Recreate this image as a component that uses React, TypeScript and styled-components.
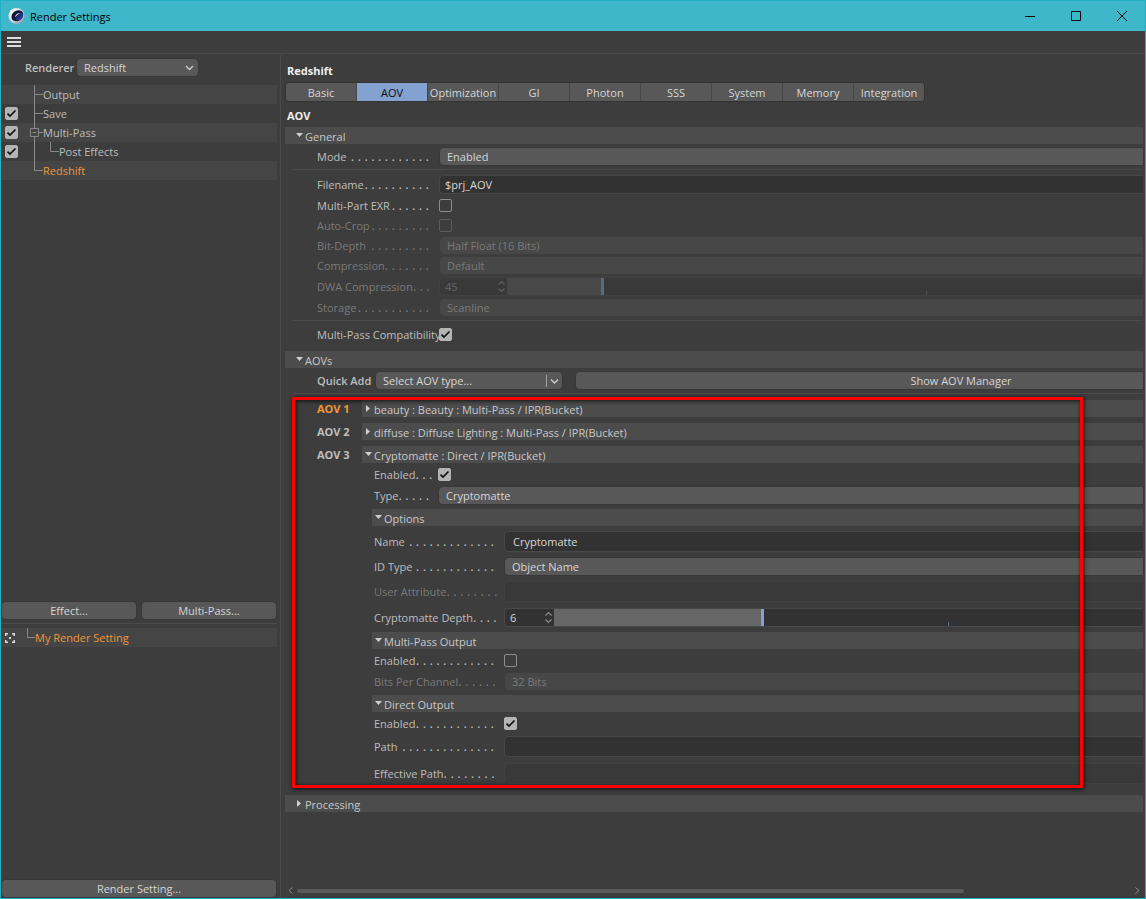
import React, { useId, useState } from "react";
import styled, { createGlobalStyle } from "styled-components";

const c = {
  bg: "#3d3d3d",
  bar: "#4c4c4c",
  stripe: "#454545",
  line: "#4b4b4b",
  control: "#585858",
  controlOff: "#474747",
  well: "#323232",
  wellOff: "#393939",
  text: "#bebebe",
  bright: "#d6d6d6",
  off: "#7a7a7a",
  orange: "#f0963c",
  blue: "#84a2d0",
  cyan: "#3db7c9",
  edge: "#1fb0c4",
};

const GlobalStyle = createGlobalStyle`
  *, *::before, *::after { box-sizing: border-box; }
  body { margin: 0; background: ${c.bg}; }
  body, button, input, select {
    font-family: "Open Sans", "Noto Sans", sans-serif;
    font-size: 11px;
    line-height: 17px;
    color: ${c.text};
  }
  button, input, select { margin: 0; padding: 0; border: 0; outline: 0; }
`;

/* ---------- window frame ---------- */

const Window = styled.div`
  display: flex;
  flex-direction: column;
  min-height: 100vh;
  border: 1px solid ${c.edge};
  background: ${c.bg};
`;

const TitleBar = styled.header`
  display: flex;
  align-items: center;
  height: 30px;
  padding-left: 7px;
  background: ${c.cyan};
`;

const Title = styled.span`
  flex: 1;
  margin-left: 4px;
  color: #000;
`;

const WindowButton = styled.button`
  display: flex;
  align-items: center;
  justify-content: center;
  width: 46px;
  height: 28px;
  background: transparent;
`;

const MenuBar = styled.nav`
  display: flex;
  align-items: center;
  height: 23px;
  padding-left: 6px;
  border-bottom: 1px solid ${c.line};
`;

const IconButton = styled.button`
  display: flex;
  background: transparent;
`;

const Body = styled.div`
  display: flex;
  flex: 1;
  padding-top: 1px;
`;

/* ---------- shared controls ---------- */

const Button = styled.button`
  flex: 1;
  height: 17px;
  border-radius: 4px;
  background: ${c.control};
  box-shadow: 0 0 0 1px #383838;
  color: ${c.bright};
`;

const CheckInput = styled.input`
  appearance: none;
  flex: none;
  width: 13px;
  height: 13px;
  border: 1px solid #8c8c8c;
  border-radius: 2px;
  background: transparent;
  &:checked {
    border-color: #b4b4b4;
    background: #b4b4b4
      url("data:image/svg+xml,%3Csvg xmlns='http://www.w3.org/2000/svg' viewBox='0 0 11 11'%3E%3Cpath d='M1.500 5.6 4 8 9.500 2.500' fill='none' stroke='%23111' stroke-width='1.7'/%3E%3C/svg%3E")
      center / 11px 11px no-repeat;
  }
  &:disabled { border-color: #5c5c5c; }
`;

const Select = styled.select<{ $open?: boolean }>`
  appearance: none;
  flex: 1;
  min-width: 0;
  height: 17px;
  margin-left: 1px;
  padding-left: 7px;
  border-radius: ${(p) => (p.$open ? "4px 0 0 4px" : "4px")};
  background: ${c.control};
  box-shadow: 0 0 0 1px #383838;
  color: ${c.bright};
  &:disabled {
    background: ${c.controlOff};
    color: ${c.off};
    box-shadow: none;
    opacity: 1;
  }
`;

const SelectBox = styled.span<{ $width: number }>`
  position: relative;
  display: flex;
  flex: none;
  width: ${(p) => p.$width}px;
  & > svg {
    position: absolute;
    right: 2px;
    top: 2px;
    pointer-events: none;
  }
`;

const TextInput = styled.input<{ $tall?: boolean }>`
  flex: 1;
  min-width: 0;
  height: ${(p) => (p.$tall ? 21 : 19)}px;
  padding-left: ${(p) => (p.$tall ? 8 : 5)}px;
  border: 1px solid #484848;
  border-right: 0;
  border-radius: 4px 0 0 4px;
  background: ${c.well};
  color: ${c.bright};
  &:disabled { background: ${c.wellOff}; border-color: #414141; color: ${c.off}; }
`;

const NumberBox = styled.span<{ $width: number; $off?: boolean }>`
  display: flex;
  align-items: center;
  flex: none;
  width: ${(p) => p.$width}px;
  height: 19px;
  padding-right: 1px;
  border: 1px solid ${(p) => (p.$off ? "#414141" : "#484848")};
  border-right: 0;
  border-radius: 4px 0 0 4px;
  background: ${(p) => (p.$off ? c.wellOff : c.well)};
  color: ${(p) => (p.$off ? "#5e5e5e" : "#8c8c8c")};
`;

const NumberInput = styled.input`
  flex: 1;
  min-width: 0;
  padding-left: 5px;
  background: transparent;
  color: ${c.bright};
  &:disabled { color: #666; }
`;

const Range = styled.input<{ $fill: number; $tick: number }>`
  appearance: none;
  flex: 1;
  min-width: 0;
  height: 19px;
  border-top: 1px solid #484848;
  border-bottom: 1px solid #484848;
  background:
    linear-gradient(#56708c, #56708c) ${(p) => p.$tick}% 100% / 1px 4px no-repeat,
    linear-gradient(#666, #666) 0 0 / ${(p) => p.$fill}% 100% no-repeat,
    ${c.well};
  &::-webkit-slider-thumb {
    appearance: none;
    width: 3px;
    height: 17px;
    background: ${c.blue};
  }
  &:disabled {
    border-color: #414141;
    background:
      linear-gradient(#505050, #505050) ${(p) => p.$tick}% 100% / 1px 4px no-repeat,
      linear-gradient(#484848, #484848) 0 0 / ${(p) => p.$fill}% 100% no-repeat,
      ${c.wellOff};
  }
  &:disabled::-webkit-slider-thumb { background: #5a6a82; }
`;

/* ---------- left panel ---------- */

const Sidebar = styled.aside`
  display: flex;
  flex-direction: column;
  flex: none;
  width: 280px;
  border-right: 1px solid ${c.line};
  padding-right: 3px;
`;

const RendererRow = styled.div`
  display: flex;
  align-items: center;
  margin: 4px 0 9px 24px;
`;

const BoldLabel = styled.label<{ $width: number }>`
  flex: none;
  width: ${(p) => p.$width}px;
  font-weight: 600;
  white-space: nowrap;
`;

const Tree = styled.ul`
  flex: 1;
  margin: 0;
  padding: 0;
  list-style: none;
`;

const TreeRow = styled.li<{ $striped?: boolean; $active?: boolean }>`
  display: flex;
  align-items: center;
  height: 19px;
  background: ${(p) => (p.$striped ? c.stripe : "transparent")};
  color: ${(p) => (p.$active ? c.orange : c.text)};
`;

const CheckSlot = styled.span`
  display: flex;
  flex: none;
  width: 25px;
  padding-left: 4px;
`;

const ButtonRow = styled.div`
  display: flex;
  gap: 6px;
  padding: 0 1px;
`;

const Presets = styled.section`
  display: flex;
  flex-direction: column;
  flex: 0 0 275px;
  margin-top: 4px;
  padding: 4px 0 1px;
  border-top: 1px solid ${c.line};
`;

/* ---------- right panel ---------- */

const Main = styled.main`
  display: flex;
  flex-direction: column;
  flex: 1;
  min-width: 0;
  padding: 7px 2px 0 4px;
`;

const Heading = styled.h2`
  margin: 0 0 0 2px;
  font-size: 11px;
  line-height: 17px;
  font-weight: 700;
  color: #eee;
`;

const Tabs = styled.div`
  display: flex;
  gap: 1px;
  align-self: flex-start;
  margin: 4px 0 6px 1px;
  border-radius: 3px;
  background: #474747;
  box-shadow: 0 0 0 1px #343434;
  overflow: hidden;
`;

const Tab = styled.button<{ $active?: boolean }>`
  width: 70px;
  height: 18px;
  background: ${(p) => (p.$active ? c.blue : c.control)};
  color: ${(p) => (p.$active ? "#0c0c0c" : c.bright)};
`;

const Bar = styled.button<{ $inset?: number; $gap?: number }>`
  display: flex;
  align-items: center;
  flex: 1;
  height: 17px;
  margin-top: ${(p) => p.$gap ?? 0}px;
  padding: 2px 0 0 ${(p) => p.$inset ?? 3}px;
  background: ${c.bar};
  color: #c8c8c8;
  line-height: 15px;
  text-align: left;
  & > svg { flex: none; margin-bottom: 2px; }
`;

const Group = styled.section<{ $gap?: number }>`
  display: flex;
  flex-direction: column;
  margin-top: ${(p) => p.$gap ?? 0}px;
`;

const Indent = styled.div<{ $left: number }>`
  display: flex;
  flex-direction: column;
  padding-left: ${(p) => p.$left}px;
`;

const Row = styled.div<{ $gap: number; $height?: number }>`
  display: flex;
  align-items: center;
  height: ${(p) => p.$height ?? 17}px;
  margin-top: ${(p) => p.$gap}px;
`;

const Rule = styled.hr`
  width: auto;
  height: 1px;
  margin: 4px 0 0 8px;
  border: 0;
  background: ${c.line};
`;

const FieldLabel = styled.label<{ $width: number; $off?: boolean }>`
  display: flex;
  justify-content: space-between;
  flex: none;
  width: ${(p) => p.$width}px;
  padding-right: 10px;
  white-space: nowrap;
  color: ${(p) => (p.$off ? c.off : c.text)};
`;

const Dots = styled.span`
  font-size: 13px;
`;

const AovList = styled.div`
  position: relative;
  margin-top: 6px;
`;

const Highlight = styled.div`
  position: absolute;
  top: -3px;
  left: 7px;
  right: 60px;
  bottom: -4px;
  border: 3px solid #f00;
  box-shadow: 1px 1px 4px rgba(0, 0, 0, 0.8), inset 1px 1px 4px rgba(0, 0, 0, 0.8);
  pointer-events: none;
`;

const AovRow = styled.div<{ $gap?: number }>`
  display: flex;
  align-items: center;
  height: 17px;
  margin-top: ${(p) => p.$gap ?? 0}px;
  padding-left: 32px;
`;

const AovName = styled.span<{ $active?: boolean }>`
  width: 45px;
  font-weight: 700;
  color: ${(p) => (p.$active ? c.orange : c.text)};
`;

const WideButton = styled(Button)`
  margin-left: 14px;
  padding-left: 203px;
  border-radius: 4px 0 0 4px;
`;

const ScrollBar = styled.div`
  display: flex;
  align-items: center;
  gap: 4px;
  height: 15px;
  margin-top: auto;
  padding: 0 3px;
`;

const ScrollTrack = styled.div`
  flex: 1;
`;

const ScrollThumb = styled.div`
  width: 80%;
  height: 4px;
  border-radius: 2px;
  background: #5a5a5a;
`;

/* ---------- drawings ---------- */

const Logo = () => (
  <svg width="18" height="18" viewBox="0 0 18 18" aria-hidden="true">
    <defs>
      <radialGradient id="ball" cx="0.35" cy="0.3" r="0.8">
        <stop offset="0" stopColor="#fff" />
        <stop offset="0.6" stopColor="#d8dbe6" />
        <stop offset="1" stopColor="#8a8ea4" />
      </radialGradient>
      <linearGradient id="eye" x1="0" y1="0" x2="1" y2="1">
        <stop offset="0" stopColor="#0d1440" />
        <stop offset="1" stopColor="#3a50b8" />
      </linearGradient>
    </defs>
    <circle cx="8.500" cy="9" r="8" fill="url(#ball)" />
    <path d="M3.500 10C3.500 6 7 3 11 3.200 14 3.400 15.800 5.500 15 9 14.200 12.500 11 14.500 8 14.200 5 13.800 3.500 12.500 3.500 10Z" fill="#10163a" />
    <path d="M15 6C12.500 4.800 9 6 8 9.500 7.400 11.800 8.500 13.300 10 13.700 13.200 13 15.800 9.500 15 6Z" fill="url(#eye)" />
    <path d="M7.200 10.500C7 7.800 9.300 5.900 12.300 6.300 10.300 7 8.600 8.300 7.200 10.500Z" fill="#dfe2f2" />
  </svg>
);

const Triangle = ({ open }: { open?: boolean }) => (
  <svg width="9" height="9" viewBox="0 0 9 9" aria-hidden="true" fill="#cfcfcf">
    {open ? <path d="M0 2h7L3.500 6Z" /> : <path d="M1 1v7L5 4.500Z" />}
  </svg>
);

const Chevron = () => (
  <svg width="13" height="13" viewBox="0 0 13 13" aria-hidden="true" fill="none" stroke="#d0d0d0" strokeWidth="1.300">
    <path d="M3 5l3.500 3.500L10 5" />
  </svg>
);

const SplitChevron = () => (
  <svg width="15" height="13" viewBox="0 0 15 13" aria-hidden="true" fill="none" stroke="#d0d0d0">
    <path d="M1.500 1v12" stroke="#a0a0a0" />
    <path d="M6 5.500L9.500 9 13 5.500" strokeWidth="1.400" />
  </svg>
);

const Spinner = () => (
  <svg width="9" height="13" viewBox="0 0 9 13" aria-hidden="true" fill="none" stroke="currentColor" strokeWidth="1.200">
    <path d="M1.500 4.500l3-3 3 3M1.500 8.500l3 3 3-3" />
  </svg>
);

type Branch = "mid" | "box" | "child" | "last";

const branchPaths: Record<Branch, string> = {
  mid: "M8.500 0V19M8.500 9.500H17",
  box: "M8.500 0V5M8.500 14V19M4.500 5.500h8v8h-8ZM6.500 9.500h4M13 9.500h4",
  child: "M8.500 0V19M24.500 0V9.500H33",
  last: "M8.500 0V9.500H17",
};

const BranchLines = ({ kind }: { kind: Branch }) => {
  const width = kind === "child" ? 33 : 17;
  return (
    <svg width={width} height="19" viewBox={`0 0 ${width} 19`} aria-hidden="true" fill="none" stroke="#8a8a8a">
      <path d={branchPaths[kind]} />
    </svg>
  );
};

/* ---------- composed fields ---------- */

type LabelProps = { id: string; text: string; dots: number; width: number; off?: boolean };

const DottedLabel = ({ id, text, dots, width, off }: LabelProps) => (
  <FieldLabel htmlFor={id} $width={width} $off={off}>
    {text}
    {dots > 0 && <Dots aria-hidden="true">{Array(dots).fill(".").join(" ")}</Dots>}
  </FieldLabel>
);

type FieldProps = { label: string; dots: number; width: number; gap: number; off?: boolean };

const SelectField = ({ label, value, dots, width, gap, off }: FieldProps & { value: string }) => {
  const id = useId();
  return (
    <Row $gap={gap}>
      <DottedLabel id={id} text={label} dots={dots} width={width} off={off} />
      <Select id={id} disabled={off} $open>
        <option>{value}</option>
      </Select>
    </Row>
  );
};

const CheckField = ({ label, checked, dots, width, gap, off }: FieldProps & { checked?: boolean }) => {
  const id = useId();
  return (
    <Row $gap={gap} $height={13}>
      <DottedLabel id={id} text={label} dots={dots} width={width} off={off} />
      <CheckInput id={id} type="checkbox" defaultChecked={checked} disabled={off} />
    </Row>
  );
};

const TextField = ({ label, value, dots, width, gap, off, dim, tall }: FieldProps & { value?: string; tall?: boolean; dim?: boolean }) => {
  const id = useId();
  return (
    <Row $gap={gap} $height={tall ? 21 : 19}>
      <DottedLabel id={id} text={label} dots={dots} width={width} off={off && !dim} />
      <TextInput id={id} type="text" defaultValue={value} disabled={off} $tall={tall} />
    </Row>
  );
};

type SliderProps = FieldProps & { value: number; max: number; tick: number; box: number };

const SliderField = ({ label, value, max, tick, box, dots, width, gap, off }: SliderProps) => {
  const id = useId();
  const [current, setCurrent] = useState(value);
  return (
    <Row $gap={gap} $height={19}>
      <DottedLabel id={id} text={label} dots={dots} width={width} off={off} />
      <NumberBox $width={box} $off={off}>
        <NumberInput
          id={id}
          type="text"
          inputMode="numeric"
          value={current}
          disabled={off}
          onChange={(e) => setCurrent(Number(e.target.value) || 0)}
        />
        <Spinner />
      </NumberBox>
      <Range
        type="range"
        aria-label={label}
        min={0}
        max={max}
        value={current}
        disabled={off}
        onChange={(e) => setCurrent(Number(e.target.value))}
        $fill={(current / max) * 100}
        $tick={tick}
      />
    </Row>
  );
};

/* ---------- page ---------- */

const tabs = ["Basic", "AOV", "Optimization", "GI", "Photon", "SSS", "System", "Memory", "Integration"];

const tree: { name: string; kind: Branch; check?: boolean; active?: boolean }[] = [
  { name: "Output", kind: "mid" },
  { name: "Save", kind: "mid", check: true },
  { name: "Multi-Pass", kind: "box", check: true },
  { name: "Post Effects", kind: "child", check: true },
  { name: "Redshift", kind: "last", active: true },
];

const OUTER = 122;
const NARROW = 64;
const WIDE = 130;

export default function App() {
  const [tab, setTab] = useState("AOV");
  return (
    <>
      <GlobalStyle />
      <Window>
        <TitleBar>
          <Logo />
          <Title>Render Settings</Title>
          <WindowButton aria-label="Minimize">
            <svg width="10" height="10" stroke="#000"><path d="M0 5.500h10" /></svg>
          </WindowButton>
          <WindowButton aria-label="Maximize">
            <svg width="10" height="10" stroke="#000" fill="none"><path d="M.5 .5h9v9h-9Z" /></svg>
          </WindowButton>
          <WindowButton aria-label="Close">
            <svg width="10" height="10" stroke="#000"><path d="M0 0L10 10M10 0L0 10" /></svg>
          </WindowButton>
        </TitleBar>
        <MenuBar>
          <IconButton aria-label="Menu">
            <svg width="14" height="10" fill="#dedede"><path d="M0 0h14v2H0ZM0 4h14v2H0ZM0 8h14v2H0Z" /></svg>
          </IconButton>
        </MenuBar>

        <Body>
          <Sidebar>
            <RendererRow>
              <BoldLabel htmlFor="renderer" $width={51}>Renderer</BoldLabel>
              <SelectBox $width={122}>
                <Select id="renderer">
                  <option>Redshift</option>
                </Select>
                <Chevron />
              </SelectBox>
            </RendererRow>
            <Tree>
              {tree.map((item, i) => (
                <TreeRow key={item.name} $striped={i % 2 === 0} $active={item.active}>
                  <CheckSlot>
                    {item.check && <CheckInput type="checkbox" defaultChecked aria-label={item.name} />}
                  </CheckSlot>
                  <BranchLines kind={item.kind} />
                  {item.name}
                </TreeRow>
              ))}
            </Tree>
            <ButtonRow>
              <Button>Effect...</Button>
              <Button>Multi-Pass...</Button>
            </ButtonRow>
            <Presets>
              <Tree>
                <TreeRow $striped $active>
                  <CheckSlot>
                    <svg width="10" height="10" fill="none" stroke="#d8d8d8" strokeWidth="1.500" aria-hidden="true">
                      <path d="M.75 3V.75H3M7 .75H9.250V3M9.250 7V9.250H7M3 9.250H.75V7" />
                      <path d="M4 4h2v2H4Z" fill="#d8d8d8" stroke="none" />
                    </svg>
                  </CheckSlot>
                  <svg width="9" height="19" fill="none" stroke="#8a8a8a" aria-hidden="true">
                    <path d="M1.500 0V9.500H9" />
                  </svg>
                  My Render Setting
                </TreeRow>
              </Tree>
              <ButtonRow>
                <Button>Render Setting...</Button>
              </ButtonRow>
            </Presets>
          </Sidebar>

          <Main>
            <Heading>Redshift</Heading>
            <Tabs role="tablist">
              {tabs.map((name) => (
                <Tab key={name} role="tab" aria-selected={name === tab} $active={name === tab} onClick={() => setTab(name)}>
                  {name}
                </Tab>
              ))}
            </Tabs>
            <Heading>AOV</Heading>

            <Group $gap={3}>
              <Bar $inset={11}><Triangle open />General</Bar>
              <Indent $left={32}>
                <SelectField label="Mode" value="Enabled" dots={12} width={OUTER} gap={4} />
              </Indent>
              <Rule />
              <Indent $left={32}>
                <TextField label="Filename" value="$prj_AOV" dots={10} width={OUTER} gap={5} />
                <CheckField label="Multi-Part EXR" dots={6} width={OUTER} gap={5} />
                <CheckField label="Auto-Crop" dots={9} width={OUTER} gap={7} off />
                <SelectField label="Bit-Depth" value="Half Float (16 Bits)" dots={9} width={OUTER} gap={5} off />
                <SelectField label="Compression" value="Default" dots={7} width={OUTER} gap={3} off />
                <SliderField label="DWA Compression" value={45} max={304} tick={66} box={68} dots={3} width={OUTER} gap={3} off />
                <SelectField label="Storage" value="Scanline" dots={11} width={OUTER} gap={3} off />
              </Indent>
              <Rule />
              <Indent $left={32}>
                <CheckField label="Multi-Pass Compatibility" checked dots={0} width={OUTER} gap={7} />
              </Indent>
            </Group>

            <Group $gap={10}>
              <Bar $inset={11}><Triangle open />AOVs</Bar>
              <Indent $left={32}>
                <Row $gap={4}>
                  <BoldLabel htmlFor="quick-add" $width={58}>Quick Add</BoldLabel>
                  <SelectBox $width={187}>
                    <Select id="quick-add">
                      <option>Select AOV type...</option>
                    </Select>
                    <SplitChevron />
                  </SelectBox>
                  <WideButton>Show AOV Manager</WideButton>
                </Row>
              </Indent>
              <Rule />
              <AovList>
                <AovRow>
                  <AovName $active>AOV 1</AovName>
                  <Bar><Triangle />beauty : Beauty : Multi-Pass / IPR(Bucket)</Bar>
                </AovRow>
                <AovRow $gap={6}>
                  <AovName>AOV 2</AovName>
                  <Bar><Triangle />diffuse : Diffuse Lighting : Multi-Pass / IPR(Bucket)</Bar>
                </AovRow>
                <AovRow $gap={6}>
                  <AovName>AOV 3</AovName>
                  <Bar><Triangle open />Cryptomatte : Direct / IPR(Bucket)</Bar>
                </AovRow>
                <Indent $left={89}>
                  <CheckField label="Enabled" checked dots={3} width={NARROW} gap={5} />
                  <SelectField label="Type" value="Cryptomatte" dots={5} width={NARROW} gap={6} />
                </Indent>
                <Indent $left={87}>
                  <Bar $gap={5}><Triangle open />Options</Bar>
                </Indent>
                <Indent $left={89}>
                  <TextField label="Name" value="Cryptomatte" dots={13} width={WIDE} gap={5} tall />
                  <SelectField label="ID Type" value="Object Name" dots={12} width={WIDE} gap={6} />
                  <TextField label="User Attribute" dots={8} width={WIDE} gap={6} off tall />
                  <SliderField label="Cryptomatte Depth" value={6} max={17} tick={67} box={50} dots={4} width={WIDE} gap={6} />
                </Indent>
                <Indent $left={87}>
                  <Bar $gap={5}><Triangle open />Multi-Pass Output</Bar>
                </Indent>
                <Indent $left={89}>
                  <CheckField label="Enabled" dots={12} width={WIDE} gap={5} />
                  <SelectField label="Bits Per Channel" value="32 Bits" dots={6} width={WIDE} gap={6} off />
                </Indent>
                <Indent $left={87}>
                  <Bar $gap={5}><Triangle open />Direct Output</Bar>
                </Indent>
                <Indent $left={89}>
                  <CheckField label="Enabled" checked dots={12} width={WIDE} gap={5} />
                  <TextField label="Path" dots={14} width={WIDE} gap={6} tall />
                  <TextField label="Effective Path" dots={8} width={WIDE} gap={6} off dim tall />
                </Indent>
                <Highlight />
              </AovList>
            </Group>

            <Group $gap={11}>
              <Bar $inset={11}><Triangle />Processing</Bar>
            </Group>

            <ScrollBar>
              <svg width="5" height="7" fill="none" stroke="#8c8c8c" aria-hidden="true"><path d="M4.500 .5L1 3.500l3.500 3" /></svg>
              <ScrollTrack>
                <ScrollThumb />
              </ScrollTrack>
              <svg width="5" height="7" fill="none" stroke="#8c8c8c" aria-hidden="true"><path d="M.5 .5L4 3.500l-3.500 3" /></svg>
            </ScrollBar>
          </Main>
        </Body>
      </Window>
    </>
  );
}
